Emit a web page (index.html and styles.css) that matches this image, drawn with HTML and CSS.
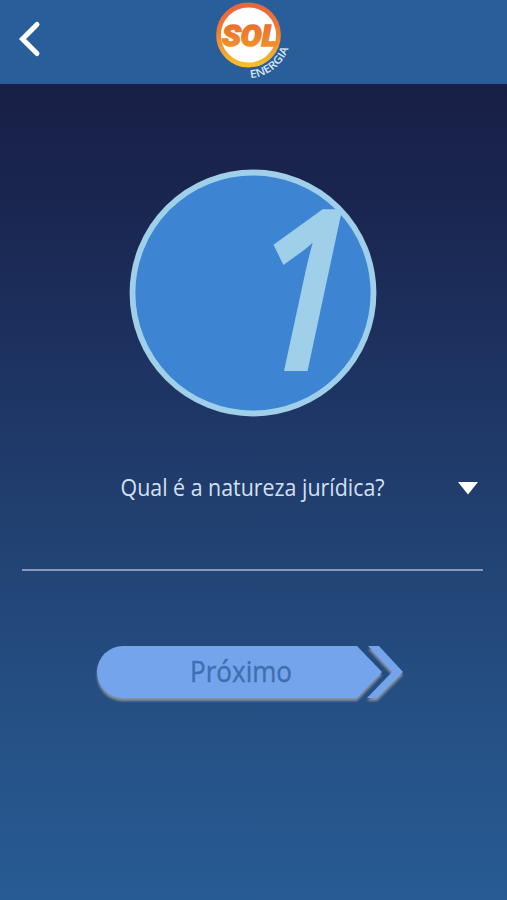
FILE: index.html
```html
<!DOCTYPE html>
<html lang="pt-BR">
<head>
<meta charset="utf-8">
<meta name="viewport" content="width=device-width">
<title>SOL Energia</title>
<link rel="stylesheet" href="styles.css">
</head>
<body>
<header class="header">
  <button class="back" aria-label="Voltar">
    <svg width="22" height="36" viewBox="0 0 22 36"><path d="M18 3.500 3.500 18 18 32.500" fill="none" stroke="#fff" stroke-width="5" stroke-linecap="round" stroke-linejoin="miter"/></svg>
  </button>
  <svg class="logo" width="90" height="84" viewBox="0 0 90 84">
    <defs>
      <linearGradient id="ring" x1="0" y1="0" x2="0" y2="1"><stop offset="0" stop-color="#e9653d"/><stop offset=".5" stop-color="#ec8232"/><stop offset="1" stop-color="#f8bd2b"/></linearGradient>
      <linearGradient id="word" x1="0" y1="0" x2="0" y2="1"><stop offset="0" stop-color="#e8652c"/><stop offset="1" stop-color="#f29a2c"/></linearGradient>
      <path id="arc" d="M42.500 78A43 43 0 0 0 82.500 35"/>
    </defs>
    <circle cx="40.500" cy="35" r="30" fill="#fff" stroke="url(#ring)" stroke-width="4.800"/>
    <text class="logo-word" x="14" y="45.500" textLength="56" lengthAdjust="spacingAndGlyphs">SOL</text>
    <text class="logo-sub"><textPath href="#arc" textLength="51" lengthAdjust="spacingAndGlyphs">ENERGIA</textPath></text>
  </svg>
</header>
<main class="main">
  <svg class="step" width="248" height="248" viewBox="0 0 248 248">
    <circle cx="124" cy="124" r="120.500" fill="#3d84d2" stroke="#9fcfe9" stroke-width="5.800"/>
    <text class="step-number" transform="translate(119.200 201) skewX(-2) scale(.84 1)">1</text>
  </svg>
  <div class="select">
    <svg class="question" width="280" height="36" viewBox="0 0 280 36"><text class="question-text" x="2.500" y="26" textLength="264" lengthAdjust="spacingAndGlyphs">Qual é a natureza jurídica?</text></svg>
    <svg class="caret" width="20" height="13" viewBox="0 0 20 13"><path d="M0 0h20L10 12.500z" fill="#fff"/></svg>
  </div>
  <button class="next">
    <svg width="316" height="68" viewBox="0 0 316 68">
      <g class="next-shape">
        <path d="M30 6H264L289 32 264 58H30A26 26 0 0 1 30 6Z"/>
        <path d="M275 6H286L310 32 284 58H274L299 32Z"/>
      </g>
      <text class="next-text" x="97" y="42" textLength="102" lengthAdjust="spacingAndGlyphs">Próximo</text>
    </svg>
  </button>
</main>
</body>
</html>
```
FILE: styles.css
```css
* { box-sizing: border-box; }
body {
  margin: 0;
  min-height: 900px;
  display: flex;
  flex-direction: column;
  font-family: "Open Sans", "Noto Sans", sans-serif;
  background: #275b96;
}
svg { display: block; overflow: visible; }
button { padding: 0; border: 0; background: none; }
.header {
  height: 84px;
  display: grid;
  grid-template-columns: 208px 90px 1fr;
  align-items: center;
  background: #285e99;
}
.back { padding: 0 0 6px 19px; justify-self: start; }
.logo-word { font: italic 900 30px Roboto, sans-serif; fill: url(#word); stroke: url(#word); stroke-width: 1.6px; }
.logo-sub { font: 600 11px "Open Sans", sans-serif; fill: #d6e5f5; }
.main {
  flex: 1;
  display: flex;
  flex-direction: column;
  align-items: center;
  padding: 85px 22px 0;
  background: linear-gradient(#181f46 0, #1a2650 15%, #203c6c 48%, #254f83 76%, #275b93 100%);
}
.step { margin-right: 2px; }
.step-number { font: italic 600 224px "Open Sans", sans-serif; fill: #9fcfe9; stroke: #9fcfe9; stroke-width: 2px; }
.select {
  width: 461px;
  height: 102px;
  margin: 52px 2px 0 0;
  padding: 1px 5px 0 96px;
  display: flex;
  justify-content: space-between;
  border-bottom: 2px solid #8997bb;
}
.caret { margin-top: 12px; }
.question-text { font-size: 23.500px; fill: #d4e0f2; }
.next { margin: 69px 6px 0 0; }
.next-shape { fill: #74a5ec; filter: drop-shadow(.5px 3px 1px #858e9b); }
.next-text { font: 400 30px "Open Sans", sans-serif; fill: #3e6fb0; stroke: #3e6fb0; stroke-width: .4px; }
```
